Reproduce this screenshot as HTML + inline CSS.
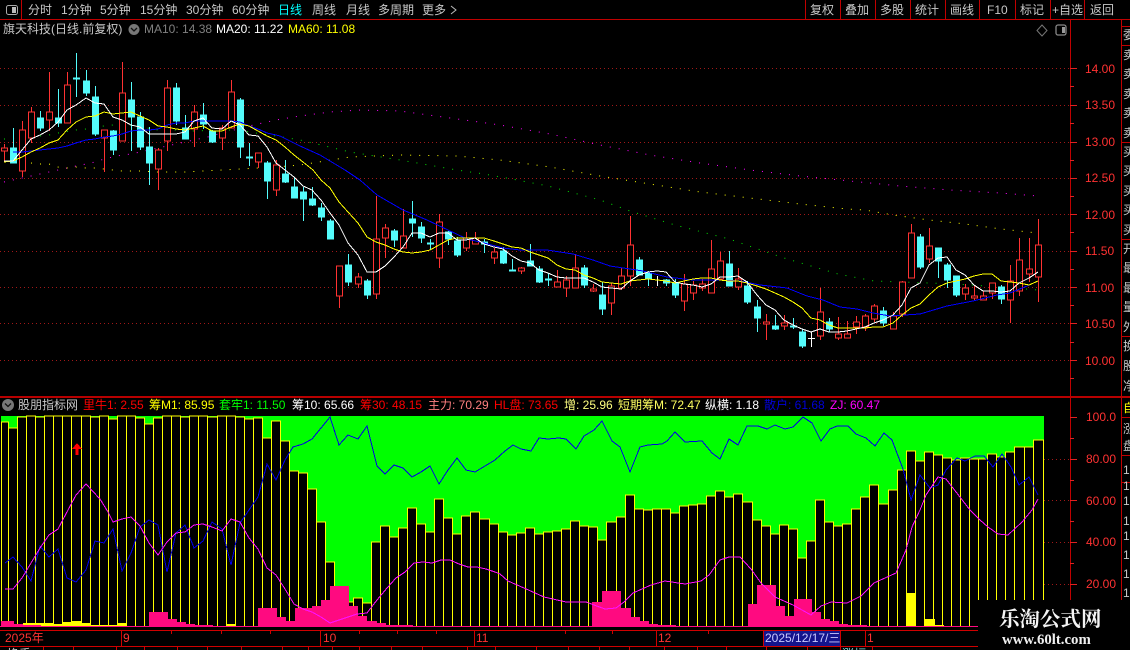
<!DOCTYPE html>
<html><head><meta charset="utf-8"><title>K线</title>
<style>
html,body{margin:0;padding:0;background:#000;width:1130px;height:650px;overflow:hidden}
svg{display:block}
text{font-family:"Liberation Sans","WenQuanYi Zen Hei","Noto Sans CJK SC",sans-serif;font-size:12px;white-space:pre}
.t{fill:#c8c8c8}
.ax{fill:#ff3232}
.c{fill:#c8c8c8}
</style></head><body>
<svg width="1130" height="650" viewBox="0 0 1130 650" xmlns="http://www.w3.org/2000/svg">
<rect width="1130" height="650" fill="#000"/>

<!-- grid -->
<g stroke="#a01818" stroke-width="1" stroke-dasharray="1 3" shape-rendering="crispEdges">
<path d="M0 68.5H1070M0 105.5H1070M0 142.5H1070M0 178.5H1070M0 214.5H1070M0 251.5H1070M0 287.5H1070M0 323.5H1070M0 360.5H1070"/>
<path d="M1044 459.5H1070M1044 500.5H1070M1044 542.5H1070M1044 584.5H1070"/>
</g>

<!-- long-MA dots -->
<g fill="none" stroke-width="1" stroke-dasharray="1 8.07">
<polyline stroke="#ff00ff" points="4,182 13,180 22,178 31,176 40,174 49,172 58,170 67,168 76,166 86,164 95,162 104,159 113,157 122,155 131,154 140,152 149,150 158,148 167,146 176,144 185,142 194,140 203,138 212,136 222,133 231,131 240,128 249,126 258,124 267,122 276,120 300,116 330,112 360,110 400,111 450,118 500,125 550,134 600,145 650,155 700,163 750,170 800,176 850,181 900,186 950,190 1000,193 1038,196"/>
<polyline stroke="#ffff00" points="31,163 40,164 49,164 58,167 67,168 76,167 86,168 95,168 104,169 113,170 122,171 140,171 158,172 185,172 203,171 222,170 240,169 258,168 276,167 300,165 350,157 400,155 457,156 500,160 550,167 600,176 650,184 700,192 750,198 800,204 847,209 865,210 893,215 929,220 965,224 1001,229 1038,233"/>
<polyline stroke="#00e000" points="4,139 22,138 49,135 58,133 76,130 86,129 95,127 104,126 113,125 122,126 131,125 158,130 176,130 194,131 222,130 240,130 249,132 276,136 300,140 350,152 400,160 457,170 484,174 512,179 548,186 600,200 630,211 675,225 729,239 784,258 838,274 874,281 902,282 956,284 1001,287 1038,290"/>
</g>

<g shape-rendering="crispEdges">
<!-- cyan candles -->
<path stroke="#54fcfc" fill="none" d="M13.5 128V163M40.5 111V131M58.5 89V127M76.5 53V97M86.5 70V96M95.5 86V136M113.5 130V155M131.5 82V151M140.5 112V150M149.5 127V185M176.5 83V125M185.5 115V139M203.5 103V129M212.5 130V143M240.5 98V158M249.5 143V166M267.5 161V199M285.5 160V183M294.5 177V198M303.5 187V221M312.5 187V206M321.5 203V221M330.5 219V239M348.5 254V286M367.5 279V299M394.5 229V247M412.5 201V237M421.5 222V243M430.5 239V250M448.5 231V245M457.5 237V257M484.5 239V253M503.5 247V264M512.5 259V271M530.5 244V266M539.5 266V283M548.5 273V286M584.5 265V288M602.5 282V315M639.5 257V275M648.5 271V286M666.5 279V286M675.5 279V298M729.5 251V286M747.5 281V304M757.5 300V332M775.5 315V330M793.5 318V329M802.5 329V348M829.5 318V332M883.5 307V326M920.5 234V269M938.5 248V278M947.5 263V288M956.5 276V297M1001.5 285V304"/>
<path stroke="#54fcfc" fill="#54fcfc" d="M10.5 148h6V163h-6zM37.5 118h6V128h-6zM55.5 118h6V123h-6zM73.5 78h6V79h-6zM83.5 81h6V93h-6zM92.5 97h6V134h-6zM110.5 131h6V150h-6zM128.5 100h6V117h-6zM137.5 117h6V147h-6zM146.5 147h6V163h-6zM173.5 88h6V121h-6zM182.5 128h6V139h-6zM200.5 115h6V124h-6zM209.5 131h6V142h-6zM237.5 100h6V147h-6zM246.5 157h6V158h-6zM264.5 163h6V181h-6zM282.5 174h6V182h-6zM291.5 187h6V198h-6zM300.5 192h6V199h-6zM309.5 199h6V205h-6zM318.5 208h6V217h-6zM327.5 221h6V239h-6zM345.5 265h6V282h-6zM364.5 281h6V295h-6zM391.5 231h6V240h-6zM409.5 219h6V223h-6zM418.5 227h6V238h-6zM427.5 243h6V244h-6zM445.5 232h6V239h-6zM454.5 241h6V255h-6zM481.5 242h6V244h-6zM500.5 251h6V263h-6zM509.5 270h6V271h-6zM527.5 261h6V266h-6zM536.5 269h6V282h-6zM545.5 279h6V280h-6zM581.5 268h6V285h-6zM599.5 295h6V309h-6zM636.5 260h6V275h-6zM645.5 273h6V279h-6zM663.5 280h6V283h-6zM672.5 283h6V295h-6zM726.5 264h6V286h-6zM744.5 286h6V302h-6zM754.5 307h6V318h-6zM772.5 326h6V329h-6zM790.5 326h6V327h-6zM799.5 332h6V346h-6zM826.5 322h6V329h-6zM880.5 311h6V323h-6zM917.5 237h6V267h-6zM935.5 248h6V261h-6zM944.5 265h6V280h-6zM953.5 276h6V295h-6zM998.5 287h6V299h-6z"/>
<path stroke="#fff" d="M657.5 276V286M811.5 332V347M808 338.5h7"/>
<!-- red candles -->
<path stroke="#ff3232" fill="none" d="M4.5 144V161M22.5 121V177M31.5 107V143M49.5 72V131M67.5 72V123M104.5 130V172M122.5 62V141M158.5 148V190M167.5 80V151M194.5 105V147M222.5 125V150M231.5 80V128M258.5 153V168M276.5 160V196M339.5 266V308M358.5 273V288M376.5 196V299M385.5 224V258M403.5 209V248M439.5 214V268M466.5 232V251M475.5 232V244M494.5 248V264M521.5 267V274M557.5 270V287M566.5 276V297M575.5 254V288M593.5 284V292M611.5 283V315M621.5 268V290M630.5 216V286M684.5 274V311M693.5 281V300M702.5 279V291M711.5 240V293M720.5 252V279M738.5 268V290M766.5 314V340M784.5 315V330M820.5 288V340M838.5 317V340M847.5 321V338M856.5 316V334M865.5 314V331M874.5 304V322M893.5 312V329M902.5 281V317M911.5 224V278M929.5 228V263M965.5 284V300M974.5 286V301M983.5 291V300M992.5 283V299M1010.5 265V323M1019.5 238V296M1029.5 238V282M1038.5 219V302"/>
<path stroke="#ff3232" fill="#000" d="M1.5 148h6V151h-6zM19.5 130h6V171h-6zM28.5 112h6V138h-6zM46.5 112h6V120h-6zM64.5 85h6V123h-6zM101.5 130h6V138h-6zM119.5 93h6V141h-6zM155.5 150h6V169h-6zM164.5 88h6V141h-6zM191.5 112h6V129h-6zM219.5 128h6V138h-6zM228.5 92h6V128h-6zM255.5 153h6V162h-6zM273.5 165h6V190h-6zM336.5 266h6V296h-6zM355.5 277h6V284h-6zM373.5 239h6V294h-6zM382.5 228h6V238h-6zM400.5 236h6V248h-6zM436.5 222h6V258h-6zM463.5 238h6V248h-6zM472.5 238h6V244h-6zM491.5 252h6V258h-6zM518.5 268h6V271h-6zM554.5 282h6V287h-6zM563.5 280h6V288h-6zM572.5 268h6V288h-6zM590.5 289h6V291h-6zM608.5 286h6V303h-6zM618.5 276h6V288h-6zM627.5 245h6V276h-6zM681.5 284h6V301h-6zM690.5 285h6V293h-6zM699.5 284h6V288h-6zM708.5 269h6V293h-6zM717.5 261h6V279h-6zM735.5 279h6V287h-6zM763.5 322h6V324h-6zM781.5 323h6V326h-6zM817.5 312h6V336h-6zM835.5 334h6V338h-6zM844.5 334h6V338h-6zM853.5 322h6V327h-6zM862.5 316h6V327h-6zM871.5 306h6V319h-6zM890.5 316h6V329h-6zM899.5 282h6V314h-6zM908.5 233h6V278h-6zM926.5 246h6V259h-6zM962.5 288h6V294h-6zM971.5 296h6V298h-6zM980.5 296h6V300h-6zM989.5 283h6V293h-6zM1007.5 281h6V300h-6zM1016.5 260h6V291h-6zM1026.5 269h6V274h-6zM1035.5 245h6V277h-6z"/>

<!-- MA lines -->
<polyline fill="none" stroke="#0000ff" stroke-width="1" points="13,152 22,152 31,151 40,150 49,149 58,148 67,146 76,143 86,140 95,139 104,137 113,136 122,134 131,131 140,130 149,130 158,129 167,125 176,123 185,123 194,121 203,121 212,121 222,121 231,121 240,122 249,126 258,129 267,133 276,135 280,136 300,146 320,155 345,170 360,180 377,195 403,210 427,220 448,230 467,239 484,243 503,248 520,250 547,250 560,252 573,254 593,260 610,266 630,269 643,271 667,277 693,280 717,280 740,281 760,285 787,288 807,296 823,300 840,307 857,309 873,313 890,316 920,314 947,306 973,301 997,295 1010,293 1027,286 1038,281"/>
<polyline fill="none" stroke="#ffff00" stroke-width="1" points="4,162 13,161 22,157 31,152 40,148 49,143 58,140 67,130 76,122 86,117 95,116 104,112 113,114 122,113 131,112 140,116 149,120 158,126 167,127 176,129 185,130 194,128 203,126 212,131 222,131 231,127 240,124 249,126 258,131 267,136 276,140 285,147 294,155 303,162 313,170 321,180 330,188 339,202 348,212 358,223 367,237 376,242 385,245 394,249 403,252 412,253 421,252 430,250 439,245 448,240 457,238 466,238 475,238 484,238 494,241 503,244 512,247 521,248 530,252 539,255 548,258 557,265 566,269 575,270 584,275 593,278 602,282 611,283 621,284 630,281 639,280 648,279 657,280 666,281 675,283 684,281 693,279 702,278 711,278 720,280 729,281 738,281 747,283 757,286 766,289 775,293 784,297 793,302 802,308 811,318 820,320 829,325 838,328 847,328 865,328 874,327 883,327 893,323 902,315 911,308 920,304 929,295 938,287 947,283 956,281 965,279 974,276 983,274 992,274 1001,281 1010,282 1019,283 1029,285 1038,281"/>
<polyline fill="none" stroke="#ffffff" stroke-width="1" points="4,161 13,161 22,150 31,139 40,135 49,130 58,122 67,110 76,105 86,98 95,103 104,104 113,117 122,120 131,125 140,127 149,134 158,134 167,134 176,134 185,132 194,121 203,118 212,128 222,129 231,121 240,125 249,135 258,136 267,147 276,163 285,170 294,177 303,186 312,190 321,200 330,213 339,225 348,243 358,255 367,272 376,272 385,266 394,257 403,247 412,233 421,233 430,237 439,233 448,233 457,240 466,240 475,238 484,244 494,247 503,249 512,256 521,261 530,263 539,270 548,273 557,277 566,278 575,278 584,278 593,282 602,287 611,288 621,289 630,281 639,275 648,272 657,271 666,272 675,282 684,284 693,285 702,287 711,284 720,277 729,277 738,276 747,282 757,295 766,305 775,310 784,320 793,325 802,329 811,332 820,329 829,332 838,332 847,331 856,329 865,327 874,323 883,320 893,315 902,305 911,288 920,283 929,265 938,258 947,257 956,270 965,275 974,285 983,291 992,291 1001,292 1010,291 1019,283 1029,278 1038,272"/>

<!-- indicator area -->
<rect x="1" y="416" width="1043" height="210" fill="#00ff00"/>
<path fill="#000" stroke="#ffff00" d="M1.5 626V422H8.5V626M8.5 626V428H17.5V626M17.5 626V417H26.5V626M26.5 626V416H35.5V626M35.5 626V417H44.5V626M44.5 626V416H53.5V626M53.5 626V416H62.5V626M62.5 626V416H71.5V626M71.5 626V416H81.5V626M81.5 626V416H90.5V626M90.5 626V417H99.5V626M99.5 626V416H108.5V626M108.5 626V419H117.5V626M117.5 626V416H126.5V626M126.5 626V416H135.5V626M135.5 626V418H144.5V626M144.5 626V424H153.5V626M153.5 626V418H162.5V626M162.5 626V416H171.5V626M171.5 626V416H180.5V626M180.5 626V417H189.5V626M189.5 626V416H198.5V626M198.5 626V416H207.5V626M207.5 626V417H217.5V626M217.5 626V416H226.5V626M226.5 626V416H235.5V626M235.5 626V417H244.5V626M244.5 626V419H253.5V626M253.5 626V418H262.5V626M262.5 626V438H271.5V626M271.5 626V421H280.5V626M280.5 626V441H289.5V626M289.5 626V471H298.5V626M298.5 626V473H307.5V626M307.5 626V489H316.5V626M316.5 626V522H325.5V626M325.5 626V562H334.5V626M334.5 626V606H343.5V626M343.5 626V602H353.5V626M353.5 626V598H362.5V626M362.5 626V603H371.5V626M371.5 626V542H380.5V626M380.5 626V526H389.5V626M389.5 626V537H398.5V626M398.5 626V528H407.5V626M407.5 626V508H416.5V626M416.5 626V524H425.5V626M425.5 626V532H434.5V626M434.5 626V499H443.5V626M443.5 626V518H452.5V626M452.5 626V534H461.5V626M461.5 626V516H470.5V626M470.5 626V512H479.5V626M479.5 626V519H489.5V626M489.5 626V524H498.5V626M498.5 626V532H507.5V626M507.5 626V535H516.5V626M516.5 626V533H525.5V626M525.5 626V528H534.5V626M534.5 626V534H543.5V626M543.5 626V532H552.5V626M552.5 626V531H561.5V626M561.5 626V529H570.5V626M570.5 626V521H579.5V626M579.5 626V526H588.5V626M588.5 626V527H597.5V626M597.5 626V540H606.5V626M606.5 626V522H616.5V626M616.5 626V517H625.5V626M625.5 626V495H634.5V626M634.5 626V509H643.5V626M643.5 626V510H652.5V626M652.5 626V509H661.5V626M661.5 626V509H670.5V626M670.5 626V513H679.5V626M679.5 626V506H688.5V626M688.5 626V505H697.5V626M697.5 626V504H706.5V626M706.5 626V496H715.5V626M715.5 626V491H724.5V626M724.5 626V497H733.5V626M733.5 626V494H742.5V626M742.5 626V502H752.5V626M752.5 626V520H761.5V626M761.5 626V526H770.5V626M770.5 626V534H779.5V626M779.5 626V525H788.5V626M788.5 626V529H797.5V626M797.5 626V558H806.5V626M806.5 626V541H815.5V626M815.5 626V500H824.5V626M824.5 626V522H833.5V626M833.5 626V526H842.5V626M842.5 626V524H851.5V626M851.5 626V509H860.5V626M860.5 626V497H869.5V626M869.5 626V485H878.5V626M878.5 626V504H888.5V626M888.5 626V490H897.5V626M897.5 626V470H906.5V626M906.5 626V451H915.5V626M915.5 626V461H924.5V626M924.5 626V452H933.5V626M933.5 626V455H942.5V626M942.5 626V458H951.5V626M951.5 626V460H960.5V626M960.5 626V458H969.5V626M969.5 626V459H978.5V626M978.5 626V459H987.5V626M987.5 626V454H996.5V626M996.5 626V457H1005.5V626M1005.5 626V452H1014.5V626M1014.5 626V447H1024.5V626M1024.5 626V447H1033.5V626M1033.5 626V440H1043.5V626"/>
<!-- yellow low bars -->
<path fill="#ffff00" d="M23 623H44V626H23zM44 623H53V626H44zM53 624H62V626H53zM62 622H71V626H62zM71 621H81V626H71zM81 623H91V626H81zM91 625H117V626H91zM117 623H127V626H117zM226 624H236V626H226zM906 593H916V626H906zM925 619H935V626H925zM935 625H944V626H935z"/>
<!-- pink bars -->
<path fill="#ff0a80" d="M1 621H14V627H1zM14 624H23V627H14zM23 625H41V627H23zM149 612H168V627H149zM168 619H177V627H168zM177 622H186V627H177zM186 624H195V627H186zM195 625H213V627H195zM258 608H277V627H258zM277 617H286V627H277zM286 621H295V627H286zM295 608H312V627H295zM312 606H321V627H312zM321 600H330V627H321zM330 586H349V627H330zM349 606H358V627H349zM358 616H367V627H358zM367 621H377V627H367zM377 623H386V627H377zM386 625H413V627H386zM592 602H602V627H592zM602 591H621V627H602zM621 608H631V627H621zM631 617H640V627H631zM640 621H649V627H640zM649 624H658V627H649zM658 625H676V627H658zM748 604H757V627H748zM757 585H776V627H757zM776 606H785V627H776zM785 616H794V627H785zM794 599H812V627H794zM812 612H821V627H812zM821 619H830V627H821zM830 621H839V627H830zM839 624H848V627H839zM848 625H867V627H848zM0 626H978V627H0z"/>
<!-- arrow -->
<path fill="#ff0000" d="M77 443L82 449H78.5V455H75.5V449H72z"/>
<polyline fill="none" stroke="#0000e6" stroke-width="1" points="5,563 13,557 22,567 31,581 40,546 49,557 58,549 67,578 76,582 86,570 95,541 104,543 113,529 122,571 131,553 140,527 149,520 158,525 167,572 176,533 185,525 194,548 203,541 212,522 222,529 231,565 240,523 249,510 258,497 267,464 276,480 285,460 293,447 303,444 312,439 330,417 339,445 348,435 358,439 367,426 377,466 385,474 394,465 403,468 412,477 421,472 430,466 439,484 448,470 457,458 466,470 475,472 480,469 495,460 505,451 513,445 521,449 531,451 539,438 548,439 559,438 566,439 576,449 584,436 594,430 602,421 612,441 620,447 630,472 640,447 648,445 662,444 667,441 675,432 685,442 702,441 712,453 720,459 729,439 738,445 747,426 758,426 767,429 775,425 785,429 793,427 803,417 812,423 821,441 830,429 837,426 848,426 856,434 866,438 875,446 884,433 892,440 903,469 911,500 920,475 930,488 938,485 946,470 957,458 965,461 975,456 984,456 993,467 1002,454 1011,467 1019,485 1029,477 1038,495"/>
<polyline fill="none" stroke="#ff10ff" stroke-width="1" points="5,589 13,589 22,578 31,563 40,548 49,535 58,529 68,510 76,495 86,484 100,499 108,512 113,522 122,519 131,517 140,526 149,543 158,555 167,542 176,533 185,532 194,525 203,524 212,527 222,531 231,519 240,522 249,538 258,549 267,568 276,575 285,589 294,604 303,609 312,612 321,617 330,623 339,620 348,617 357,614 367,613 377,600 387,588 396,578 405,572 414,563 423,562 432,563 441,560 450,560 459,564 468,567 477,567 486,569 495,572 500,574 508,581 524,588 544,597 566,602 586,602 594,605 605,609 616,608 624,602 633,593 651,585 665,581 685,584 701,581 709,575 720,560 729,557 740,557 751,569 761,583 775,597 793,605 811,615 821,606 831,602 847,603 861,596 874,583 896,573 906,550 912,527 920,510 926,495 938,477 946,479 970,510 980,520 988,527 998,534 1008,535 1022,522 1032,510 1038,499"/>

<!-- frame lines -->
<path fill="none" stroke="#c00000" d="M0 19.5H1130M21.5 0V19M805.5 0V19M840.5 0V19M875.5 0V19M910.5 0V19M945.5 0V19M979.5 0V19M1015.5 0V19M1050.5 0V19M1084.5 0V19M1070.5 19V650M1121.5 19V650M1122 26.5H1130M1122 45.5H1130M1122 142.5H1130M1122 239.5H1130M1122 336.5H1130M1122 417.5H1130M1122 455.5H1130M1122 482.5H1130"/>
<rect x="0" y="396" width="1130" height="2" fill="#b80000"/>
<path fill="none" stroke="#d00000" d="M0 630.5H1070M0 646.5H1070M121.5 630V646M320.5 630V646M474.5 630V646M656.5 630V646M865.5 630V646M171.5 630V634M221.5 630V634M270.5 630V634M359.5 630V634M397.5 630V634M436.5 630V634M565.5 630V634M612.5 630V634M708.5 630V634M43.5 646V650M73.5 646V650M116.5 646V650M144.5 646V650M177.5 646V650M207.5 646V650M241.5 646V650M282.5 646V650M308.5 646V650M332.5 646V650M359.5 646V650M391.5 646V650M422.5 646V650M467.5 646V650M495.5 646V650M536.5 646V650M568.5 646V650M599.5 646V650M629.5 646V650M664.5 646V650M697.5 646V650M726.5 646V650M766.5 646V650M807.5 646V650M840.5 646V650M872.5 646V650"/>
<!-- axis ticks -->
<path stroke="#e02020" fill="none" d="M1070 68.5H1077M1070 105.5H1077M1070 142.5H1077M1070 178.5H1077M1070 214.5H1077M1070 251.5H1077M1070 287.5H1077M1070 323.5H1077M1070 360.5H1077M1070 86.5H1074M1070 123.5H1074M1070 160.5H1074M1070 196.5H1074M1070 232.5H1074M1070 269.5H1074M1070 305.5H1074M1070 342.5H1074M1070 378.5H1074M1070 417.5H1077M1070 459.5H1077M1070 500.5H1077M1070 542.5H1077M1070 584.5H1077M1070 438.5H1074M1070 480.5H1074M1070 521.5H1074M1070 563.5H1074M1070 605.5H1074"/>
<!-- date box -->
<rect x="763.5" y="630.5" width="77" height="16" fill="#14148c" stroke="#d00000"/>
</g>

<!-- toolbar -->
<rect x="6.5" y="5.5" width="11" height="9" rx="2" fill="none" stroke="#aaa"/>
<rect x="12" y="7" width="4" height="6" fill="#bbb"/>
<text class="t" x="28" y="14">分时</text>
<text class="t" x="61" y="14">1分钟</text>
<text class="t" x="100" y="14">5分钟</text>
<text class="t" x="140" y="14">15分钟</text>
<text class="t" x="186" y="14">30分钟</text>
<text class="t" x="232" y="14">60分钟</text>
<text x="278" y="14" fill="#00ffff">日线</text>
<text class="t" x="312" y="14">周线</text>
<text class="t" x="346" y="14">月线</text>
<text class="t" x="378" y="14">多周期</text>
<text class="t" x="422" y="14">更多</text>
<path d="M451 6L456 10L451 14" fill="none" stroke="#bbb"/>
<text class="t" x="810" y="14">复权</text>
<text class="t" x="845" y="14">叠加</text>
<text class="t" x="880" y="14">多股</text>
<text class="t" x="915" y="14">统计</text>
<text class="t" x="950" y="14">画线</text>
<text class="t" x="987" y="14">F10</text>
<text class="t" x="1020" y="14">标记</text>
<text class="t" x="1052" y="14">+自选</text>
<text class="t" x="1090" y="14">返回</text>

<!-- header row -->
<text class="t" x="3" y="33">旗天科技(日线.前复权)</text>
<circle cx="134" cy="29.5" r="5.5" fill="#777"/>
<path d="M131 28L134 31L137 28" fill="none" stroke="#111" stroke-width="1.3"/>
<text x="144" y="33" fill="#808080">MA10: 14.38</text>
<text x="216" y="33" fill="#ffffff">MA20: 11.22</text>
<text x="288" y="33" fill="#ffff00">MA60: 11.08</text>
<path d="M1042 25L1047 30.5L1042 36L1037 30.5Z" fill="none" stroke="#777"/>
<rect x="1056" y="25" width="10" height="10" rx="2" fill="none" stroke="#888" stroke-width="1.3"/>
<rect x="1062" y="27" width="3" height="6" fill="#999"/>

<!-- y axis labels -->
<g class="ax">
<text class="ax" x="1085" y="73">14.00</text>
<text class="ax" x="1085" y="109">13.50</text>
<text class="ax" x="1085" y="146">13.00</text>
<text class="ax" x="1085" y="182">12.50</text>
<text class="ax" x="1085" y="219">12.00</text>
<text class="ax" x="1085" y="255">11.50</text>
<text class="ax" x="1085" y="292">11.00</text>
<text class="ax" x="1085" y="328">10.50</text>
<text class="ax" x="1085" y="365">10.00</text>
<text class="ax" x="1086" y="421">100.0</text>
<text class="ax" x="1086" y="463">80.00</text>
<text class="ax" x="1086" y="505">60.00</text>
<text class="ax" x="1086" y="546">40.00</text>
<text class="ax" x="1086" y="588">20.00</text>
</g>

<!-- right column -->
<text class="c" x="1123" y="39">委</text>
<text class="c" x="1123" y="59">卖</text><text class="c" x="1123" y="78">卖</text><text class="c" x="1123" y="98">卖</text><text class="c" x="1123" y="117">卖</text><text class="c" x="1123" y="137">卖</text>
<text class="c" x="1123" y="156">买</text><text class="c" x="1123" y="175">买</text><text class="c" x="1123" y="195">买</text><text class="c" x="1123" y="214">买</text><text class="c" x="1123" y="234">买</text>
<text class="c" x="1123" y="253">开</text><text class="c" x="1123" y="272">最</text><text class="c" x="1123" y="292">最</text><text class="c" x="1123" y="311">量</text><text class="c" x="1123" y="331">外</text>
<text class="c" x="1123" y="350">换</text><text class="c" x="1123" y="370">股</text><text class="c" x="1123" y="390">净</text>
<text x="1123" y="412" fill="#ffff00">自</text>
<text class="c" x="1123" y="433">涨</text><text class="c" x="1123" y="450">盘</text>
<text class="c" x="1123" y="474">1</text><text class="c" x="1123" y="490">1</text><text class="c" x="1123" y="505">1</text><text class="c" x="1123" y="525">1</text><text class="c" x="1123" y="540">1</text><text class="c" x="1123" y="559">1</text><text class="c" x="1123" y="578">1</text><text class="c" x="1123" y="597">1</text>

<!-- indicator header -->
<circle cx="8" cy="405" r="6" fill="#777"/>
<path d="M5 403.5L8 406.5L11 403.5" fill="none" stroke="#111" stroke-width="1.3"/>
<text class="t" x="18" y="409">股朋指标网</text>
<text x="83" y="409" fill="#ff0000">里牛1: 2.55</text>
<text x="149" y="409" fill="#ffff00">筹M1: 85.95</text>
<text x="219" y="409" fill="#00ff00">套牢1: 11.50</text>
<text x="292" y="409" fill="#ffffff">筹10: 65.66</text>
<text x="360" y="409" fill="#ff0000">筹30: 48.15</text>
<text x="428" y="409" fill="#ff8080">主力: 70.29</text>
<text x="494" y="409" fill="#ff0000">HL盘: 73.65</text>
<text x="564" y="409" fill="#ffff80">增: 25.96</text>
<text x="618" y="409" fill="#ffff60">短期筹M: 72.47</text>
<text x="705" y="409" fill="#ffffff">纵横: 1.18</text>
<text x="764" y="409" fill="#0000d8">散户: 61.68</text>
<text x="830" y="409" fill="#ff00ff">ZJ: 60.47</text>

<!-- time axis labels -->
<text class="ax" x="5" y="642">2025年</text>
<text class="ax" x="123" y="642">9</text>
<text class="ax" x="323" y="642">10</text>
<text class="ax" x="476" y="642">11</text>
<text class="ax" x="658" y="642">12</text>
<text x="765" y="642" fill="#c8c8ff">2025/12/17/三</text>
<text class="ax" x="867" y="642">1</text>
<text x="7" y="658" fill="#ccc">换手</text>
<text x="842" y="658" fill="#7fe8e8">涨幅</text>

<!-- watermark -->
<rect x="978" y="600" width="152" height="50" fill="#000"/>
<text x="999" y="626" style="font-family:'Noto Serif CJK SC','Liberation Serif',serif;font-size:20.5px;font-weight:700" fill="#f4f4f4">乐淘公式网</text>
<text x="1002" y="644" style="font-family:'Liberation Serif',serif;font-size:14.8px;font-weight:700" fill="#f0f0f0">www.60lt.com</text>
</svg>
</body></html>
